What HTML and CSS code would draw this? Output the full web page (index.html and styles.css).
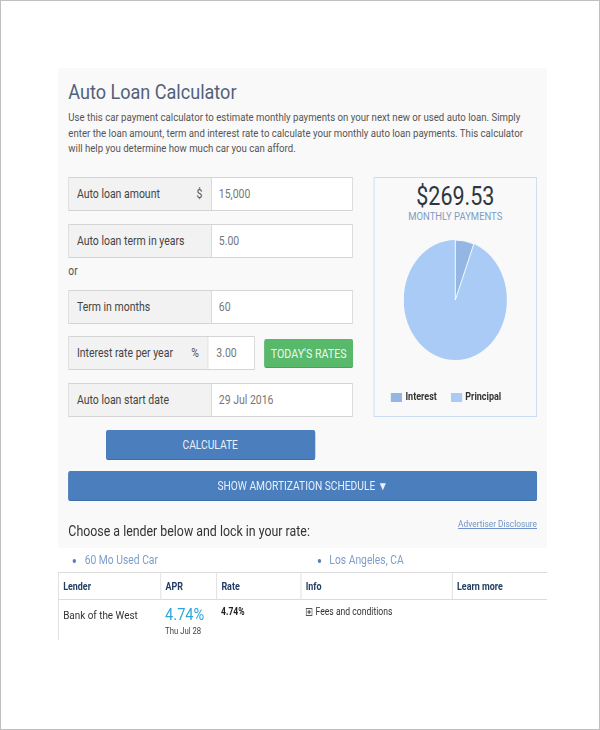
FILE: index.html
```html
<!DOCTYPE html>
<html lang="en">
<head>
<meta charset="utf-8">
<title>Auto Loan Calculator</title>
<link rel="stylesheet" href="styles.css">
</head>
<body>
<div class="frame">
  <div class="squish">
    <section class="panel">
      <h1 class="title">Auto Loan Calculator</h1>
      <p class="desc">Use this car payment calculator to estimate monthly payments on your next new or used auto loan. Simply enter the loan amount, term and interest rate to calculate your monthly auto loan payments. This calculator will help you determine how much car you can afford.</p>

      <div class="calc">
        <div class="form">
          <div class="row">
            <div class="label"><span>Auto loan amount</span><span class="unit">$</span></div>
            <div class="input">15,000</div>
          </div>
          <div class="row no-gap">
            <div class="label"><span>Auto loan term in years</span></div>
            <div class="input">5.00</div>
          </div>
          <div class="or">or</div>
          <div class="row gap12">
            <div class="label"><span>Term in months</span></div>
            <div class="input">60</div>
          </div>
          <div class="rate-line">
            <div class="row short">
              <div class="label narrow"><span>Interest rate per year</span><span class="unit">%</span></div>
              <div class="input tight">3.00</div>
            </div>
            <button class="btn-green" type="button">TODAY'S RATES</button>
          </div>
          <div class="row">
            <div class="label"><span>Auto loan start date</span></div>
            <div class="input">29 Jul 2016</div>
          </div>
          <div class="calc-wrap">
            <button class="btn-blue btn-calc" type="button">CALCULATE</button>
          </div>
        </div>

        <div class="result">
          <div class="amount">$269.53</div>
          <div class="monthly">MONTHLY PAYMENTS</div>
          <svg class="pie" width="120" height="120" viewBox="0 0 120 120">
            <circle cx="60" cy="60" r="60" fill="#a9cbf6"/>
            <path d="M60 60 L60 0 A60 60 0 0 1 81.5 4 Z" fill="#94b6e2" stroke="#ffffff" stroke-width="1"/>
          </svg>
          <div class="legend">
            <span class="sw sw-int"></span><span class="lg-text">Interest</span>
            <span class="sw sw-pri"></span><span class="lg-text">Principal</span>
          </div>
        </div>
      </div>

      <button class="btn-blue btn-amort" type="button">SHOW AMORTIZATION SCHEDULE &#9660;</button>

      <div class="lender-head">
        <span class="choose">Choose a lender below and lock in your rate:</span>
        <a class="disclosure" href="#">Advertiser Disclosure</a>
      </div>
    </section>

    <ul class="filters">
      <li>60 Mo Used Car</li>
      <li>Los Angeles, CA</li>
    </ul>

    <div class="table-clip">
      <table class="lenders">
        <colgroup>
          <col class="c1"><col class="c2"><col class="c3"><col class="c4"><col class="c5">
        </colgroup>
        <thead>
          <tr><th>Lender</th><th>APR</th><th>Rate</th><th>Info</th><th>Learn more</th></tr>
        </thead>
        <tbody>
          <tr>
            <td class="bank">Bank of the West</td>
            <td class="apr"><div class="apr-big">4.74%</div><div class="apr-date">Thu Jul 28</div></td>
            <td class="rate">4.74%</td>
            <td class="info"><svg class="plusbox" width="8" height="8" viewBox="0 0 8 8"><rect x="0.5" y="0.5" width="7" height="7" fill="#f4f4f4" stroke="#555"/><path d="M2 4 H6 M4 2 V6" stroke="#333" stroke-width="1"/></svg>Fees and conditions</td>
            <td class="last"></td>
          </tr>
        </tbody>
      </table>
    </div>
  </div>
</div>
</body>
</html>
```

FILE: styles.css
```css
* { box-sizing: border-box; }
html, body { margin: 0; padding: 0; background: #fff; }
body { font-family: Roboto, "Liberation Sans", Arial, sans-serif; color: #444; }

.frame {
  width: 600px;
  height: 730px;
  border: 1px solid #c0c0c0;
  overflow: hidden;
  padding-top: 67px;
}

.squish {
  width: 569px;
  margin-left: 57px;
  transform: scaleX(0.86);
  transform-origin: 0 0;
}

.panel {
  background: #f9f9f9;
  height: 480px;
  padding: 12px 12px 0 12px;
}

.title {
  margin: 0;
  font-size: 21px;
  line-height: 24px;
  font-weight: 400;
  color: #52617a;
}

.desc {
  margin: 6px 0 20px 0;
  font-size: 11.2px;
  line-height: 15.7px;
  color: #555;
}

.calc { display: flex; align-items: flex-start; }
.form { width: 331px; }

.row {
  display: flex;
  height: 34px;
  border: 1px solid #d4d4d4;
  font-size: 12.2px;
  margin-bottom: 13px;
}
.row.no-gap { margin-bottom: 0; }
.row.gap12 { margin-bottom: 12px; }
.label {
  flex: 0 0 166px;
  background: #f2f2f2;
  border-right: 1px solid #d4d4d4;
  display: flex;
  align-items: center;
  justify-content: space-between;
  padding: 0 10px 0 9px;
  color: #444;
}
.label.narrow { flex-basis: 162px; }
.unit { color: #555; }
.input {
  flex: 1;
  background: #fff;
  display: flex;
  align-items: center;
  padding-left: 8px;
  color: #777;
}
.input.tight { padding-left: 9px; }

.or {
  font-size: 12px;
  line-height: 16px;
  padding-top: 5px;
  height: 32px;
  color: #555;
}

.rate-line { display: flex; align-items: center; margin-bottom: 13px; }
.row.short { width: 217px; margin-bottom: 0; }
.btn-green {
  margin-left: 11px;
  width: 103px;
  height: 28px;
  border: 0;
  border-radius: 2px;
  background: #58b96b;
  color: #eef8ef;
  font-family: inherit;
  font-size: 12.4px;
  padding: 0;
  box-shadow: 0 1px 0 #47a35a;
}

.calc-wrap { display: flex; justify-content: center; padding-right: 1px; }
.btn-blue {
  border: 0;
  border-radius: 2px;
  background: #4b7ebd;
  color: #eaf0f8;
  font-family: inherit;
  font-size: 11.9px;
  padding: 0;
  box-shadow: 0 1px 0 #3e6ea8;
}
.btn-calc { width: 243px; height: 29px; }

.result {
  width: 190px;
  height: 240px;
  margin-left: 24px;
  border: 1px solid #c8dbf0;
  text-align: center;
  padding-top: 6px;
}
.amount {
  font-size: 25px;
  line-height: 26px;
  color: #2f3640;
}
.monthly {
  font-size: 11px;
  line-height: 14px;
  color: #7f9cc2;
}
.pie { display: block; margin: 16px auto 0; }
.legend {
  display: flex;
  align-items: center;
  margin-top: 30px;
  padding-left: 19px;
  font-size: 10.5px;
  line-height: 14px;
  font-weight: 700;
  color: #333;
}
.sw { display: inline-block; width: 13px; height: 9px; }
.sw-int { background: #94b6e2; }
.sw-pri { background: #a9cbf6; margin-left: 16px; }
.lg-text { margin-left: 4px; }

.btn-amort {
  display: block;
  width: 100%;
  height: 29px;
  margin-top: 12px;
}

.lender-head {
  display: flex;
  justify-content: space-between;
  align-items: flex-start;
  margin-top: 22px;
}
.choose {
  font-size: 14.4px;
  line-height: 20px;
  color: #333;
}
.disclosure {
  font-size: 9.7px;
  line-height: 12px;
  color: #6f93c6;
  text-decoration: underline;
  margin-top: -4px;
}

.filters {
  display: flex;
  margin: 0;
  padding: 0;
  height: 24px;
  align-items: center;
  font-size: 12px;
  color: #7d9dca;
}
.filters li {
  flex: 1;
  margin-left: 31px;
  list-style: disc outside;
}
.filters li::marker { color: #5a7fb5; }

.table-clip { height: 68px; overflow: hidden; }
.lenders {
  width: 569px;
  border-collapse: collapse;
  table-layout: fixed;
  background: #fff;
}
.c1 { width: 119px; }
.c2 { width: 65px; }
.c3 { width: 98px; }
.c4 { width: 176px; }
.c5 { width: 111px; }
.lenders th { border: 1px solid #dcdcdc; }
.lenders td { border: 0; vertical-align: top; }
.lenders td.bank { border-left: 1px solid #dcdcdc; }
.lenders td.last { border-right: 1px solid #dcdcdc; }
.lenders th {
  height: 27px;
  text-align: left;
  vertical-align: middle;
  font-size: 10.4px;
  font-weight: 700;
  color: #213d63;
  padding: 0 5px;
}
.lenders td { padding: 0 5px; height: 60px; }
.bank { font-size: 11.5px; color: #333; padding-top: 8px !important; line-height: 14px; }
.apr { padding-top: 3px !important; }
.apr-big { font-size: 17px; line-height: 22px; color: #2ea6dd; }
.apr-date { font-size: 9px; line-height: 10px; color: #444; margin-top: 1px; }
.rate { font-size: 10px; font-weight: 700; color: #222; padding-top: 6px !important; line-height: 12px; }
.info { font-size: 10px; color: #333; padding-top: 6px !important; line-height: 12px; }
.plusbox {
  display: inline-block;
  margin-right: 4px;
  vertical-align: -0.5px;
}
```
